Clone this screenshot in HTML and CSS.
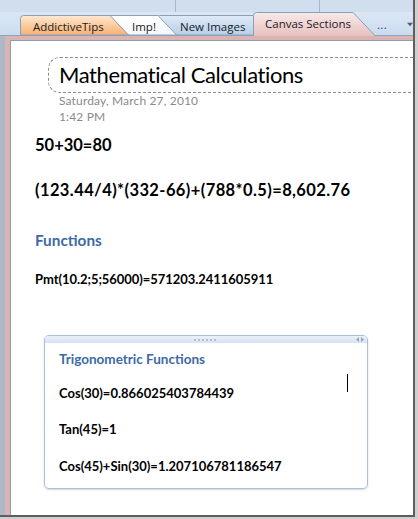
FILE: index.html
```html
<!DOCTYPE html>
<html>
<head>
<meta charset="utf-8">
<link rel="stylesheet" href="styles.css">
</head>
<body>
<div class="screen">
  <div class="toolbar">
    <div class="tcell c1"></div>
    <div class="tcell c2"></div>
    <div class="tcell c3"></div>
  </div>
  <div class="tabbar">
    <div class="tab t1">
      <svg class="tabshape" width="109" height="20" viewBox="0 0 109 20">
        <defs><linearGradient id="g1" x1="0" y1="0" x2="0" y2="1"><stop offset="0" stop-color="#fde9d4"/><stop offset="0.45" stop-color="#fbcfa5"/><stop offset="1" stop-color="#f7b073"/></linearGradient></defs>
        <path d="M0.5,20 V3.5 Q0.5,0.5 3.5,0.5 H90 L108.5,20 Z" fill="url(#g1)" stroke="#8f9fb5"/>
      </svg>
      <span class="tlabel">AddictiveTips</span>
    </div>
    <div class="tab t2">
      <svg class="tabshape" width="71" height="20" viewBox="0 0 71 20">
        <defs><linearGradient id="g2" x1="0" y1="0" x2="0" y2="1"><stop offset="0" stop-color="#ffffff"/><stop offset="1" stop-color="#f5f7fa"/></linearGradient></defs>
        <path d="M0.5,20 V3.5 Q0.5,0.5 3.5,0.5 H52 L70.5,20 Z" fill="url(#g2)" stroke="#8f9fb5"/>
      </svg>
      <span class="tlabel">Imp!</span>
    </div>
    <div class="tab t3">
      <svg class="tabshape" width="119" height="20" viewBox="0 0 119 20">
        <defs><linearGradient id="g3" x1="0" y1="0" x2="0" y2="1"><stop offset="0" stop-color="#dfeaf7"/><stop offset="1" stop-color="#b7cfea"/></linearGradient></defs>
        <path d="M0.5,20 V3.5 Q0.5,0.5 3.5,0.5 H100 L118.5,20 Z" fill="url(#g3)" stroke="#8f9fb5"/>
      </svg>
      <span class="tlabel">New Images</span>
    </div>
    <div class="tab t4">
      <svg class="tabshape" width="123" height="24" viewBox="0 0 123 24">
        <defs><linearGradient id="g4" x1="0" y1="0" x2="0" y2="1"><stop offset="0" stop-color="#f9e9e9"/><stop offset="1" stop-color="#e6c0c0"/></linearGradient></defs>
        <path d="M0,24 V3.5 Q0.5,0.5 3.5,0.5 H100 L122.5,24 Z" fill="url(#g4)"/>
        <path d="M0.5,24 V3.5 Q0.5,0.5 3.5,0.5 H100 L122.5,24" fill="none" stroke="#8f9fb5"/>
      </svg>
      <span class="tlabel">Canvas Sections</span>
    </div>
    <div class="tab t5">
      <span class="tlabel more">...</span>
      <svg class="arrow" width="9" height="5" viewBox="0 0 9 5"><path d="M0,0 H9 L4.5,5 Z" fill="#555e69"/></svg>
    </div>
  </div>
  <div class="main">
    <div class="pink">
      <div class="page">
        <div class="titlebox">
          <div class="title">Mathematical Calculations</div>
        </div>
        <div class="date">
          <div>Saturday, March 27, 2010</div>
          <div>1:42 PM</div>
        </div>
        <div class="big first">50+30=80</div>
        <div class="big second">(123.44/4)*(332-66)+(788*0.5)=8,602.76</div>
        <div class="heading">Functions</div>
        <div class="line pmt">Pmt(10.2;5;56000)=571203.2411605911</div>
        <div class="box">
          <div class="boxbar">
            <svg class="grip" width="24" height="2" viewBox="0 0 24 2">
              <rect x="0" y="0" width="2" height="2" fill="#b5bfcc"/>
              <rect x="4" y="0" width="2" height="2" fill="#b5bfcc"/>
              <rect x="8" y="0" width="2" height="2" fill="#b5bfcc"/>
              <rect x="12" y="0" width="2" height="2" fill="#b5bfcc"/>
              <rect x="16" y="0" width="2" height="2" fill="#b5bfcc"/>
              <rect x="20" y="0" width="2" height="2" fill="#b5bfcc"/>
            </svg>
            <svg class="resize" width="8" height="5" viewBox="0 0 8 5">
              <path d="M3,0 V5 L0,2.5 Z" fill="#9aa6b5"/>
              <path d="M5,0 V5 L8,2.5 Z" fill="#9aa6b5"/>
            </svg>
          </div>
          <div class="boxbody">
            <div class="boxhead">Trigonometric Functions</div>
            <div class="line bl1">Cos(30)=0.866025403784439</div>
            <div class="line bl2">Tan(45)=1</div>
            <div class="line bl3">Cos(45)+Sin(30)=1.207106781186547</div>
            <span class="cursor"></span>
          </div>
        </div>
      </div>
    </div>
  </div>
</div>
</body>
</html>
```
FILE: styles.css
```css
html, body {
  margin: 0;
  padding: 0;
}
body {
  width: 418px;
  height: 519px;
  overflow: hidden;
  background: #cfcfcf;
  font-family: "Lato", "Open Sans", sans-serif;
}
.screen {
  width: 413px;
  height: 515px;
  border-right: 2px solid #5e5e5e;
  border-bottom: 2px solid #5e5e5e;
  display: flex;
  flex-direction: column;
  background: #d6e2f1;
  overflow: hidden;
}
.toolbar {
  height: 12px;
  display: flex;
  background: #d1deed;
  flex: none;
}
.tcell { height: 12px; }
.c1 { width: 175px; }
.c2 { width: 143px; border-left: 1px solid #a9b8cc; }
.c3 { flex: 1; border-left: 1px solid #a9b8cc; }
.tabbar {
  height: 23px;
  flex: none;
  display: flex;
  align-items: flex-end;
  padding-left: 20px;
  background: linear-gradient(#dbe7f5, #ccdcf0);
  border-bottom: 1px solid #8fa3bd;
}
.tab {
  position: relative;
  height: 20px;
  display: flex;
  align-items: center;
  flex: none;
}
.tabshape {
  position: absolute;
  left: 0;
  top: 0;
}
.tlabel {
  position: relative;
  font-family: "Open Sans", "Noto Sans", sans-serif;
  font-size: 11.5px;
  color: #1b1b1b;
  white-space: nowrap;
  padding-top: 2px;
}
.t1 { width: 109px; z-index: 4; padding-left: 13px; box-sizing: border-box; }
.t2 { width: 71px; margin-left: -23px; z-index: 3; padding-left: 26px; box-sizing: border-box; }
.t3 { width: 119px; margin-left: -21px; z-index: 2; padding-left: 24px; box-sizing: border-box; }
.t4 { width: 123px; height: 24px; margin-left: -22px; margin-bottom: -1px; z-index: 5; padding-left: 12px; box-sizing: border-box; }
.t4 .tlabel { padding-top: 0; padding-bottom: 2px; }
.t5 { width: 63px; margin-left: -26px; z-index: 1; padding-left: 27px; box-sizing: border-box; }
.more { color: #3d2f72; letter-spacing: 0.3px; padding-bottom: 4px; }
.arrow { margin-left: 20px; margin-top: -2px; }
.main {
  flex: 1;
  display: flex;
  background: #aeb9c7;
  padding-left: 5px;
}
.pink {
  flex: 1;
  display: flex;
  background: #d9b4b3;
  padding: 4px 0 0 5px;
}
.page {
  flex: 1;
  background: #ffffff;
  border-left: 1px solid #8e9db3;
  border-top: 1px solid #8e9db3;
  padding-left: 24px;
  overflow: hidden;
}
.titlebox {
  margin-top: 16px;
  margin-left: 13px;
  margin-right: -2px;
  height: 34px;
  border: 1px dashed #8d8d8d;
  border-right: none;
  border-radius: 12px 0 0 12px;
  padding-left: 10px;
}
.title {
  font-size: 22px;
  line-height: 34px;
  color: #000;
  letter-spacing: -0.4px;
  white-space: nowrap;
}
.date {
  margin-left: 24px;
  font-size: 12px;
  line-height: 16px;
  color: #8a8a8a;
  letter-spacing: 0.15px;
}
.big {
  font-weight: bold;
  font-size: 16.5px;
  line-height: 20px;
  color: #000;
  white-space: nowrap;
}
.first { margin-top: 10px; }
.second { margin-top: 25px; letter-spacing: 0.4px; }
.heading {
  margin-top: 30px;
  font-weight: bold;
  font-size: 15.3px;
  line-height: 20px;
  color: #3c6aa6;
}
.line {
  font-weight: bold;
  font-size: 13px;
  line-height: 16px;
  color: #000;
  white-space: nowrap;
}
.pmt { margin-top: 21px; letter-spacing: -0.05px; }
.box {
  margin-top: 48px;
  margin-left: 9px;
  width: 322px;
  border: 1px solid #a9c0dc;
  border-radius: 5px;
  box-shadow: 0 1px 2px rgba(120, 140, 170, 0.35);
  overflow: hidden;
}
.boxbar {
  height: 7px;
  background: linear-gradient(#e9f0f9, #d6e3f3);
  display: flex;
  align-items: center;
  justify-content: center;
  position: relative;
}
.resize {
  position: absolute;
  right: 3px;
  top: 1px;
}
.boxbody {
  position: relative;
  padding: 7px 0 14px 14px;
}
.boxhead {
  font-weight: bold;
  font-size: 13.5px;
  line-height: 18px;
  color: #3c6aa6;
}
.bl1 { margin-top: 17px; }
.bl2 { margin-top: 20px; }
.bl3 { margin-top: 21px; }
.cursor {
  position: absolute;
  left: 302px;
  top: 31px;
  width: 1px;
  height: 18px;
  background: #000;
}
```
